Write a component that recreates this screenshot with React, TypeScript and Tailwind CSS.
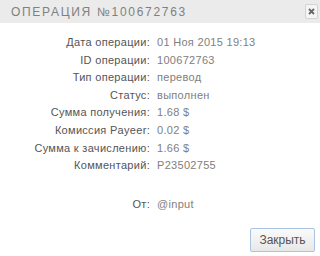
import React from 'react';

type Row = { label: string; value: string; gap?: boolean };

const rows: Row[] = [
    { label: 'Дата операции:', value: '01 Ноя 2015 19:13' },
    { label: 'ID операции:', value: '100672763' },
    { label: 'Тип операции:', value: 'перевод' },
    { label: 'Статус:', value: 'выполнен' },
    { label: 'Сумма получения:', value: '1.68 $' },
    { label: 'Комиссия Payeer:', value: '0.02 $' },
    { label: 'Сумма к зачислению:', value: '1.66 $' },
    { label: 'Комментарий:', value: 'P23502755' },
    { label: 'От:', value: '@input', gap: true },
];

const App = () => {
    return (
        <div className="w-[320px] h-[256px] bg-white flex flex-col overflow-hidden" style={{ fontFamily: '"Liberation Sans", Arial, sans-serif' }}>
            <div className="h-[23px] bg-[#ebebeb] flex items-center justify-between pl-[11px] pr-[2px]">
                <span className="text-[12px] tracking-[1.7px] text-[#808080] pt-[1px]">ОПЕРАЦИЯ №100672763</span>
                <button className="w-[13px] h-[15px] border border-[#d4d4d4] rounded-[2px] bg-[#f5f5f5] flex items-center justify-center">
                    <svg width="7" height="7" viewBox="0 0 7 7">
                        <path d="M1 1L6 6M6 1L1 6" stroke="#666" strokeWidth="1.8" />
                    </svg>
                </button>
            </div>
            <div className="grid grid-cols-[150px_1fr] gap-x-[7px] pt-[11px] text-[11px] leading-[17.6px] tracking-[0.3px]">
                {rows.map((row, i) => (
                    <React.Fragment key={i}>
                        <div className={`text-right text-[#555] ${row.gap ? 'mt-[21px]' : ''}`}>{row.label}</div>
                        <div className={`text-[#808080] ${row.gap ? 'mt-[21px]' : ''}`}>{row.value}</div>
                    </React.Fragment>
                ))}
            </div>
            <div className="flex justify-end pr-[5px] pt-[15px]">
                <button className="w-[65px] h-[24px] border border-[#a8c4e0] rounded-[2px] bg-gradient-to-b from-[#fafafa] to-[#e8e8e8] text-[12px] text-[#555]">
                    Закрыть
                </button>
            </div>
        </div>
    );
};

export default App;
